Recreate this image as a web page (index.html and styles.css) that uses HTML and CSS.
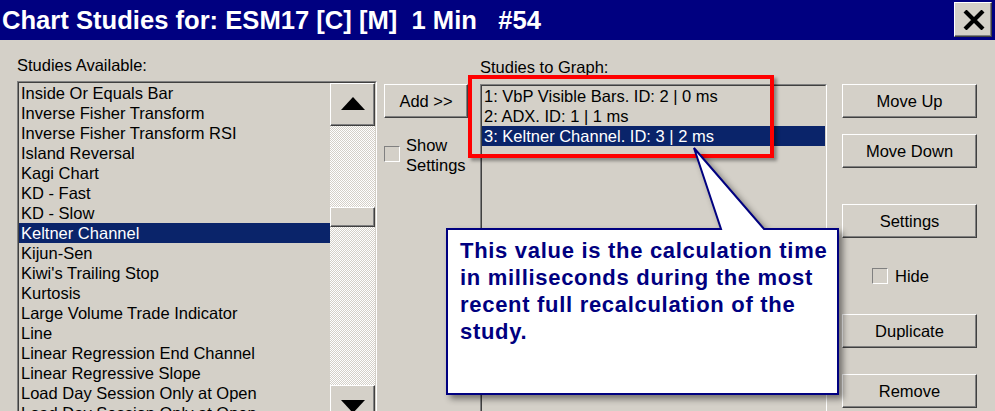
FILE: index.html
```html
<!DOCTYPE html>
<html>
<head>
<meta charset="utf-8">
<link rel="stylesheet" href="styles.css">
</head>
<body>
<div class="window">
  <div class="titlebar">
    <span class="title">Chart Studies for: ESM17 [C] [M]  1 Min   #54</span>
    <button class="close" aria-label="Close">
      <svg width="22" height="20" viewBox="0 0 22 20"><path d="M2 1 L20 19 M20 1 L2 19" stroke="#000" stroke-width="4.2" fill="none"/></svg>
    </button>
  </div>
  <div class="content">
    <div class="col-avail">
      <div class="label">Studies Available:</div>
      <div class="listbox">
        <div class="listinner">
          <ul class="items">
            <li>Inside Or Equals Bar</li>
            <li>Inverse Fisher Transform</li>
            <li>Inverse Fisher Transform RSI</li>
            <li>Island Reversal</li>
            <li>Kagi Chart</li>
            <li>KD - Fast</li>
            <li>KD - Slow</li>
            <li class="sel">Keltner Channel</li>
            <li>Kijun-Sen</li>
            <li>Kiwi's Trailing Stop</li>
            <li>Kurtosis</li>
            <li>Large Volume Trade Indicator</li>
            <li>Line</li>
            <li>Linear Regression End Channel</li>
            <li>Linear Regressive Slope</li>
            <li>Load Day Session Only at Open</li>
            <li>Load Day Session Only at Open</li>
          </ul>
          <div class="scrollbar">
            <div class="sbtn"><span class="tri-up"></span></div>
            <div class="track track-top"></div>
            <div class="thumb"></div>
            <div class="track track-bottom"></div>
            <div class="sbtn"><span class="tri-down"></span></div>
          </div>
        </div>
      </div>
    </div>
    <div class="col-mid">
      <button class="btn add">Add &gt;&gt;</button>
      <div class="check show">
        <span class="box"></span>
        <span class="check-label">Show<br>Settings</span>
      </div>
    </div>
    <div class="col-graph">
      <div class="label">Studies to Graph:</div>
      <div class="listbox graph">
        <div class="listinner">
          <ul class="items">
            <li>1: VbP Visible Bars. ID: 2 | 0 ms</li>
            <li>2: ADX. ID: 1 | 1 ms</li>
            <li class="sel">3: Keltner Channel. ID: 3 | 2 ms</li>
          </ul>
        </div>
      </div>
    </div>
    <div class="col-btns">
      <button class="btn">Move Up</button>
      <button class="btn mt16">Move Down</button>
      <button class="btn mt36">Settings</button>
      <div class="check hide">
        <span class="box"></span>
        <span class="check-label">Hide</span>
      </div>
      <button class="btn mt30">Duplicate</button>
      <button class="btn mt26">Remove</button>
    </div>

    <div class="redbox"></div>
    <div class="callout">
      <svg class="callout-shape" width="400" height="256" viewBox="0 0 400 256">
        <path d="M1 82 H275 L248 1 L318 82 H392 V247 H1 Z" fill="#fff" stroke="#000080" stroke-width="2" stroke-linejoin="miter"/>
      </svg>
      <div class="callout-text">This value is the calculation time<br>in milliseconds during the most<br>recent full recalculation of the<br>study.</div>
    </div>
  </div>
</div>
</body>
</html>
```

FILE: styles.css
```css
* { box-sizing: border-box; }
html, body { margin: 0; padding: 0; }
body {
  width: 995px;
  height: 411px;
  overflow: hidden;
  background: #d4d0c8;
  font-family: "Liberation Sans", Arial, sans-serif;
  font-size: 16.5px;
  color: #000;
}
.window { width: 995px; height: 411px; display: flex; flex-direction: column; }

.titlebar {
  height: 40px;
  background: #000080;
  display: flex;
  align-items: center;
  padding-left: 2px;
  padding-right: 3px;
  flex: none;
}
.title {
  color: #fff;
  font-weight: bold;
  font-size: 25.6px;
  line-height: 40px;
  white-space: pre;
}
.close {
  margin-left: auto;
  width: 38px;
  height: 35px;
  margin-top: -1px;
  padding: 0;
  background: #d4d0c8;
  border: 1px solid;
  border-color: #fff #404040 #404040 #fff;
  box-shadow: inset -1px -1px #808080;
  display: flex;
  align-items: center;
  justify-content: center;
}
.close svg { display: block; margin-left: 2px; }

.content {
  position: relative;
  flex: 1;
  display: flex;
  overflow: hidden;
}
.label { height: 20px; line-height: 20px; white-space: nowrap; }

.col-avail { margin-left: 17px; width: 360px; padding-top: 15px; flex: none; }
.col-avail .label { margin-bottom: 6px; }

.listbox {
  border: 1px solid;
  border-color: #808080 #fff #fff #808080;
  height: 349px;
}
.listinner {
  border: 1px solid;
  border-color: #404040 #d4d0c8 #d4d0c8 #404040;
  height: 100%;
  display: flex;
}
.items {
  list-style: none;
  margin: 0;
  padding: 0;
  flex: 1;
  min-width: 0;
}
.items li {
  height: 20px;
  line-height: 20px;
  padding-left: 2px;
  white-space: nowrap;
  overflow: hidden;
}
.items li.sel { background: #0a246a; color: #fff; }

.scrollbar {
  width: 45px;
  flex: none;
  display: flex;
  flex-direction: column;
}
.sbtn, .thumb {
  background: #d4d0c8;
  border: 1px solid;
  border-color: #fff #404040 #404040 #fff;
  box-shadow: inset -1px -1px #808080;
}
.sbtn {
  height: 43px;
  flex: none;
  display: flex;
  align-items: center;
  justify-content: center;
}
.tri-up, .tri-down {
  width: 0; height: 0;
  border-left: 12.5px solid transparent;
  border-right: 12.5px solid transparent;
}
.tri-up { border-bottom: 13px solid #000; margin-bottom: 2px; }
.tri-down { border-top: 13px solid #000; }
.track {
  background: repeating-conic-gradient(#fff 0 25%, #d4d0c8 0 50%) 0 0 / 2px 2px;
}
.track-top { height: 81px; flex: none; }
.thumb { height: 20px; flex: none; }
.track-bottom { flex: 1; }

.col-mid { margin-left: 7px; width: 84px; padding-top: 44px; flex: none; }
.btn {
  display: block;
  width: 100%;
  height: 34px;
  padding: 0;
  background: #d4d0c8;
  border: 1px solid;
  border-color: #fff #404040 #404040 #fff;
  box-shadow: inset -1px -1px #808080;
  font-family: inherit;
  font-size: 16.5px;
  color: #000;
  text-align: center;
  line-height: 30px;
}
.check { display: flex; }
.box {
  width: 16px; height: 16px; flex: none;
  border: 1px solid;
  border-color: #808080 #fff #fff #808080;
  background: #d4d0c8;
}
.check.show { margin-top: 16px; align-items: flex-start; }
.check.show .box { margin-top: 12px; }
.check.show .check-label { margin-left: 6px; line-height: 20px; margin-top: 1px; }

.col-graph { margin-left: 12px; width: 347px; padding-top: 17px; flex: none; }
.col-graph .label { margin-bottom: 7px; }
.graph { height: 360px; }

.col-btns { margin-left: 15px; width: 135px; padding-top: 44px; flex: none; }
.mt16 { margin-top: 16px; }
.mt36 { margin-top: 36px; }
.mt30 { margin-top: 30px; }
.mt26 { margin-top: 26px; }
.check.hide { margin-top: 30px; margin-left: 30px; align-items: center; height: 16px; }
.check.hide .check-label { margin-left: 7px; line-height: 16px; }

.redbox {
  position: absolute;
  left: 468px;
  top: 35px;
  width: 306px;
  height: 83px;
  border: 4px solid #ff0000;
  box-shadow: 3px 3px 3px rgba(0,0,0,0.35);
}
.callout {
  position: absolute;
  left: 446px;
  top: 107px;
  width: 400px;
  height: 256px;
}
.callout-shape {
  position: absolute;
  left: 0; top: 0;
  filter: drop-shadow(4px 4px 3px rgba(0,0,0,0.45));
}
.callout-text {
  position: absolute;
  left: 14px;
  top: 90px;
  color: #000080;
  font-weight: bold;
  font-size: 22px;
  letter-spacing: 0.7px;
  line-height: 27px;
  white-space: nowrap;
}
```
